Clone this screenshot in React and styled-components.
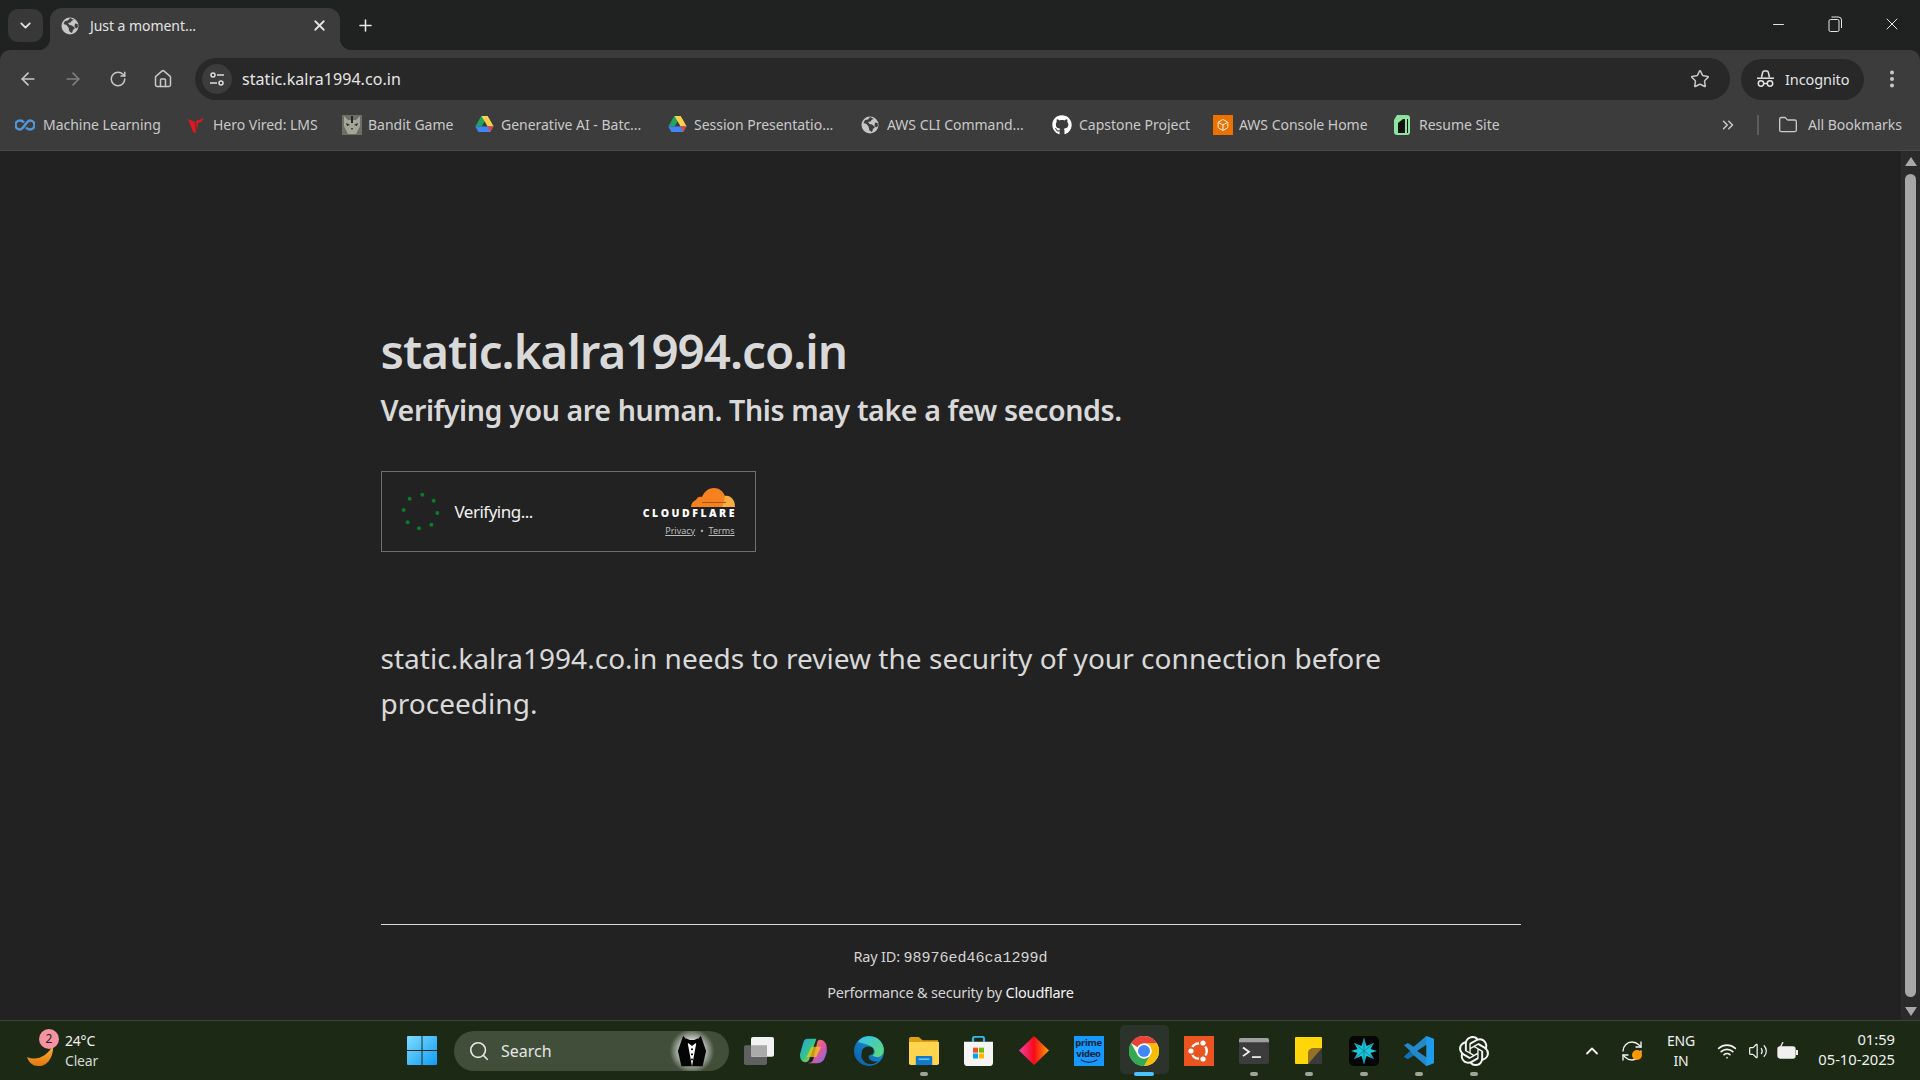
import React from 'react'
import styled, { createGlobalStyle } from 'styled-components'
import {
  ArrowLeft, ArrowRight, RotateCw, House, X, Plus, ChevronDown, ChevronUp, Star,
  EllipsisVertical, ChevronsRight, Folder, Search, Minus, Volume2, Wifi, RefreshCw, Box,
} from 'lucide-react'
import { FaGithub } from 'react-icons/fa'
import { SiOpenai } from 'react-icons/si'

const GlobalStyle = createGlobalStyle`
  html, body { margin: 0; padding: 0; height: 100%; overflow: hidden; background: #222; }
  body { font-family: "Noto Sans", "Open Sans", sans-serif; }
  * { box-sizing: border-box; }
`

const Shell = styled.div`
  width: 1920px;
  height: 1080px;
  display: flex;
  flex-direction: column;
`

/* tab strip */
const TabStrip = styled.div`
  height: 50px;
  flex: none;
  background: #202221;
  display: flex;
  align-items: flex-end;
  padding-left: 8px;
`
const TabSearch = styled.div`
  width: 35px;
  height: 33px;
  align-self: flex-start;
  margin-top: 9px;
  background: #383838;
  border-radius: 10px;
  display: flex;
  align-items: center;
  justify-content: center;
  color: #e4e4e4;
`
const Tab = styled.div`
  position: relative;
  width: 290px;
  height: 42px;
  margin-left: 7px;
  background: #3c3c3c;
  border-radius: 12px 12px 0 0;
  display: flex;
  align-items: center;
  padding: 0 12px 7px 11px;
  color: #e3e3e3;
  &::before, &::after {
    content: '';
    position: absolute;
    bottom: 0;
    width: 12px;
    height: 12px;
  }
  &::before { left: -12px; background: radial-gradient(circle at 0 0, transparent 12px, #3c3c3c 12.5px); }
  &::after { right: -12px; background: radial-gradient(circle at 100% 0, transparent 12px, #3c3c3c 12.5px); }
`
const TabTitle = styled.span`
  flex: 1;
  margin-left: 11px;
  font-size: 14px;
  letter-spacing: -0.05px;
`
const NewTab = styled.div`
  margin-left: 16px;
  height: 42px;
  padding-bottom: 7px;
  display: flex;
  align-items: center;
  color: #e8e8e8;
`
const WindowControls = styled.div`
  margin-left: auto;
  align-self: flex-start;
  display: flex;
  color: #e6e6e6;
`
const WindowButton = styled.div`
  width: 56.5px;
  height: 48px;
  display: flex;
  align-items: center;
  justify-content: center;
`

/* toolbar */
const Toolbar = styled.div`
  height: 50px;
  flex: none;
  background: #3c3c3c;
  border-radius: 10px 10px 0 0;
  display: flex;
  align-items: center;
  padding: 8px 0 0 5px;
`
const NavButton = styled.div`
  width: 45px;
  height: 36px;
  display: flex;
  align-items: center;
  justify-content: center;
  color: ${p => (p.$off ? '#7f7f7f' : '#c8c8c8')};
`
const Omnibox = styled.div`
  width: 1535px;
  height: 42px;
  margin-left: 10px;
  background: #282828;
  border-radius: 21px;
  display: flex;
  align-items: center;
  padding: 0 20px 0 7px;
`
const SiteInfo = styled.div`
  width: 30px;
  height: 30px;
  border-radius: 50%;
  background: #3c3c3c;
  display: flex;
  align-items: center;
  justify-content: center;
`
const Url = styled.span`
  flex: 1;
  margin-left: 10px;
  color: #e6e6e6;
  font-size: 16px;
  letter-spacing: 0.05px;
`
const Pill = styled.div`
  width: 123px;
  height: 41px;
  margin-left: 11px;
  border-radius: 21px;
  background: #282828;
  display: flex;
  align-items: center;
  padding-left: 15px;
  color: #e3e3e3;
  font-size: 14.5px;
  letter-spacing: -0.1px;
  gap: 10px;
`
const Kebab = styled.div`
  margin-left: 17px;
  color: #c8c8c8;
  display: flex;
`

/* bookmarks */
const BookmarkBar = styled.div`
  height: 51px;
  flex: none;
  background: #3c3c3c;
  border-bottom: 1px solid #4a4a4a;
  display: flex;
  align-items: center;
  padding: 0 18px 1px 17px;
  color: #c9c9c9;
  font-size: 14px;
  letter-spacing: -0.02px;
`
const Bookmark = styled.div`
  width: ${p => p.$w}px;
  display: flex;
  align-items: center;
  white-space: nowrap;
`
const BookmarkIcon = styled.span`
  width: 26px;
  flex: none;
  display: flex;
  align-items: center;
`
const BookmarkEnd = styled.div`
  margin-left: auto;
  display: flex;
  align-items: center;
  color: #c9c9c9;
`
const Divider = styled.span`
  width: 2px;
  height: 20px;
  margin: 0 19px 0 20px;
  background: #5c5c5c;
`

/* page */
const Viewport = styled.div`
  flex: 1;
  min-height: 0;
  display: flex;
  background: #222;
`
const Page = styled.main`
  flex: 1;
  color: #d9d9d9;
`
const Content = styled.div`
  width: 1140px;
  margin: 0 auto;
  padding-top: 170px;
`
const Heading = styled.h1`
  margin: 0;
  font-size: 47.5px;
  line-height: 60px;
  font-weight: 600;
  letter-spacing: -1px;
`
const SubHeading = styled.h2`
  margin: 8px 0 0;
  font-size: 28.6px;
  line-height: 42px;
  font-weight: 600;
  letter-spacing: -0.4px;
`
const Widget = styled.div`
  width: 375px;
  height: 81px;
  margin-top: 40px;
  border: 1px solid #6f6f6f;
  display: flex;
  align-items: center;
  padding: 0 20px 0 18px;
  color: #f2f2f2;
`
const VerifyLabel = styled.span`
  margin-left: 11px;
  font-size: 17px;
  letter-spacing: -0.5px;
  flex: 1;
`
const CloudBrand = styled.div`
  display: flex;
  flex-direction: column;
  align-items: flex-end;
`
const BrandName = styled.span`
  font-size: 10.5px;
  line-height: 10px;
  font-weight: 800;
  letter-spacing: 2.5px;
  margin-right: -2.5px;
  color: #fff;
  font-family: "Open Sans", sans-serif;
`
const BrandLinks = styled.div`
  margin-top: 7px;
  font-size: 9px;
  line-height: 12px;
  color: #bdbdbd;
  display: flex;
  gap: 5px;
  span { text-decoration: underline; }
  i { font-style: normal; }
`
const Copy = styled.p`
  margin: 84px 0 0;
  font-size: 28px;
  line-height: 45px;
  letter-spacing: 0.03px;
  color: #d9d9d9;
`
const Footer = styled.footer`
  margin-top: 198px;
  border-top: 1px solid #d9d9d9;
  padding-top: 21px;
  text-align: center;
  font-size: 14.5px;
  letter-spacing: -0.2px;
  color: #d4d4d4;
`
const FooterLine = styled.div`
  height: 20px;
  line-height: 20px;
  margin-bottom: 16px;
  b { font-weight: 400; color: #f2f2f2; }
  code { font-family: "Liberation Mono", monospace; font-size: 15px; letter-spacing: 0; }
`

const Scrollbar = styled.div`
  width: 19px;
  flex: none;
  background: #2a2a2a;
  display: flex;
  flex-direction: column;
  align-items: center;
  padding: 6px 0 4px;
  justify-content: space-between;
`
const ScrollThumb = styled.div`
  flex: 1;
  width: 11px;
  margin: 8px 0 10px;
  background: #a6a6a6;
  border-radius: 6px;
`
const ScrollArrow = styled.div`
  width: 0;
  height: 0;
  border-left: 6.5px solid transparent;
  border-right: 6.5px solid transparent;
  ${p => (p.$down ? 'border-top: 9px solid #a8a8a8;' : 'border-bottom: 9px solid #a8a8a8;')}
`

/* taskbar */
const Taskbar = styled.div`
  height: 60px;
  flex: none;
  background: #1c2a15;
  border-top: 1px solid #3b4636;
  display: flex;
  align-items: center;
  color: #f0f0f0;
`
const Weather = styled.div`
  width: 394px;
  flex: none;
  display: flex;
  align-items: center;
  padding-left: 24px;
`
const WeatherIcon = styled.div`
  position: relative;
  width: 41px;
  height: 40px;
  flex: none;
`
const Badge = styled.span`
  position: absolute;
  left: 15px;
  top: -2px;
  width: 20px;
  height: 20px;
  border-radius: 50%;
  background: #f593a2;
  color: #222;
  font-size: 12px;
  line-height: 19px;
  text-align: center;
`
const WeatherText = styled.div`
  font-size: 14px;
  line-height: 20px;
  letter-spacing: -0.2px;
  small { display: block; font-size: 14px; color: #d6d9d3; }
`
const StartButton = styled.div`
  width: 55px;
  flex: none;
  display: flex;
  justify-content: center;
`
const SearchBox = styled.div`
  width: 275px;
  height: 40px;
  flex: none;
  margin-left: 5px;
  border-radius: 20px;
  background: #414e39;
  display: flex;
  align-items: center;
  padding-left: 14px;
  color: #e6e6e6;
  font-size: 16px;
`
const SearchText = styled.span`
  margin-left: 11px;
  flex: 1;
`
const Tuxedo = styled.div`
  width: 50px;
  height: 40px;
  margin-right: 12px;
  display: flex;
  align-items: center;
  justify-content: center;
  background: radial-gradient(circle, rgba(255,255,255,.85) 30%, rgba(255,255,255,0) 70%);
`
const Apps = styled.div`
  display: flex;
  margin-left: 2px;
`
const AppSlot = styled.div`
  position: relative;
  width: 55px;
  height: 59px;
  display: flex;
  align-items: center;
  justify-content: center;
  &::before {
    content: '';
    display: ${p => (p.$active ? 'block' : 'none')};
    position: absolute;
    left: 4px;
    top: 4px;
    width: 49px;
    height: 49px;
    border-radius: 5px;
    background: #2c332a;
  }
  & > svg, & > div { position: relative; }
`
const RunDot = styled.span`
  position: absolute;
  bottom: 4px;
  left: 50%;
  transform: translateX(-50%);
  width: ${p => (p.$active ? 20 : 8)}px;
  height: 4px;
  border-radius: 2px;
  background: ${p => (p.$active ? '#4cc2ff' : '#a0a59c')};
`
const Tray = styled.div`
  margin-left: auto;
  display: flex;
  align-items: center;
  padding-right: 25px;
  height: 100%;
`
const TrayItem = styled.div`
  width: ${p => p.$w}px;
  display: flex;
  align-items: center;
  justify-content: center;
  text-align: center;
  font-size: 14px;
  line-height: 20px;
  letter-spacing: -0.2px;
  color: #f0f0f0;
`
const Clock = styled.div`
  width: 91px;
  padding-bottom: 3px;
  text-align: right;
  font-size: 14.7px;
  line-height: 20px;
  letter-spacing: 0;
`

const Globe = ({ size = 18, fill = '#c4c7c5', land = '#3c3c3c' }) => (
  <svg width={size} height={size} viewBox="0 0 18 18">
    <circle cx="9" cy="9" r="8.5" fill={fill} />
    <path d="M9 1 7 3.5 4 4 2.5 7l3 1 2 2.5 1 4L11 16l1-3 2-2-3-2.5L8.5 8 7 6l2.5-.5L11 3.5 13 3z" fill={land} />
    <path d="M14 6.5l2.5.5.5 3-2 1.5-1.5-2z" fill={land} />
  </svg>
)

const Drive = () => (
  <svg width="19" height="17" viewBox="0 0 19 17">
    <path d="M6.3 0h6.4l-6 10.5H.3z" fill="#1fa463" />
    <path d="M12.7 0l6 10.5h-6L6.5 0z" fill="#ffd04b" />
    <path d="M.3 10.5h18L15.2 16H3.4z" fill="#4285f4" />
    <path d="M12.7 10.5h5.6L15.2 16z" fill="#ea4335" />
  </svg>
)

const BanditCat = () => (
  <svg width="20" height="20" viewBox="0 0 20 20">
    <rect width="20" height="20" fill="#6c6f66" />
    <path d="M2 1l4 4h8l4-4v10l-4 8H6L2 11z" fill="#a3a599" />
    <path d="M4 8l4 2-3 1zM16 8l-4 2 3 1zM9 13h2l-1 2zM9 1h2v7H9z" fill="#26271f" />
  </svg>
)

const bookmarks = [
  { label: 'Machine Learning', w: 170, icon: (
    <svg width="20" height="12" viewBox="0 0 20 12" style={{ marginLeft: -2 }}>
      <path d="M9 3.5C7.5 1.8 6.5 1.5 5 1.5a4.5 4.5 0 0 0 0 9c3.5 0 6.5-9 10-9a4.5 4.5 0 0 1 0 9c-1.5 0-2.5-.3-4-2" fill="none" stroke="#4f97d8" strokeWidth="2.6" />
    </svg>
  ) },
  { label: 'Hero Vired: LMS', w: 155, icon: (
    <svg width="18" height="18" viewBox="0 0 18 18">
      <path d="M1 3l7 3 1 11L6 16zM9 5l8-3-3 4-3 1-1 8z" fill="#e1171e" />
    </svg>
  ) },
  { label: 'Bandit Game', w: 133, icon: <BanditCat /> },
  { label: 'Generative AI - Batc...', w: 193, icon: <Drive /> },
  { label: 'Session Presentatio...', w: 193, icon: <Drive /> },
  { label: 'AWS CLI Command...', w: 192, icon: <Globe /> },
  { label: 'Capstone Project', w: 160, icon: <FaGithub size={20} color="#fff" style={{ marginLeft: -1 }} /> },
  { label: 'AWS Console Home', w: 180, icon: (
    <svg width="20" height="20" viewBox="0 0 20 20">
      <rect width="20" height="20" fill="#ed7100" />
      <g transform="translate(3.5 3.5) scale(.54)"><Box size={24} color="#fff" strokeWidth={1.7} /></g>
    </svg>
  ) },
  { label: 'Resume Site', w: 100, icon: (
    <svg width="18" height="22" viewBox="0 0 18 22">
      <path d="M4 1h10q3 0 3 3v14q0 3-3 3H4q-3 0-3-3V6z" fill="#8fe3a0" />
      <path d="M5 9l5-4h2v14H5zM14 5h1v14h-1z" fill="#111" />
    </svg>
  ) },
]

const SiteTune = () => (
  <svg width="16" height="16" viewBox="0 0 16 16" fill="none" stroke="#dcdcdc" strokeWidth="1.5">
    <circle cx="4" cy="4" r="2" />
    <path d="M8 4h7M1 12h7" />
    <circle cx="12" cy="12" r="2" />
  </svg>
)

const IncognitoIcon = () => (
  <svg width="19" height="18" viewBox="0 0 19 18" fill="none" stroke="#e3e3e3" strokeWidth="1.5">
    <path d="M5.5 7.5L6.8 2q.2-1 1.2-1h3q1 0 1.2 1l1.3 5.5" />
    <path d="M1 8.2h17" />
    <circle cx="5" cy="13.5" r="2.7" />
    <circle cx="14" cy="13.5" r="2.7" />
    <path d="M7.7 13.5h3.6" />
  </svg>
)

const RestoreIcon = () => (
  <svg width="14" height="16" viewBox="0 0 14 16" fill="none" stroke="#e6e6e6" strokeWidth="1">
    <rect x="1" y="3.5" width="10" height="12" rx="1.5" />
    <path d="M3.5 1h7q3 0 3 3v8" />
  </svg>
)

const Spinner = () => {
  const dots = [[157, 104], [191, 122], [202, 159], [184, 194], [147, 205], [113, 187], [101, 150], [119, 116]]
  return (
    <svg width="44" height="44" viewBox="90 90 132 132">
      {dots.map(([cx, cy]) => <circle key={cx} cx={cx} cy={cy} r="6" fill="#0a7d2c" />)}
    </svg>
  )
}

const CloudLogo = () => (
  <svg width="44" height="21" viewBox="0 0 44 21">
    <path d="M0 20c0-3 2-6 5-7 1-3 4-4 6-3 2-5 6-9 12-9 5 0 9 3 11 8 1 2 1 4 0 6l-2 5z" fill="#f6821f" />
    <path d="M34 9c5-1 10 3 10 11H31c2-3 2-8 3-11z" fill="#fbad41" />
    <path d="M11 15.5h24" stroke="#a8561a" strokeWidth="1" />
  </svg>
)

const WindowsLogo = () => (
  <svg width="30" height="29" viewBox="0 0 30 30" preserveAspectRatio="none">
    <defs>
      <linearGradient id="win" x1="0" y1="0" x2="1" y2="1">
        <stop offset="0" stopColor="#7fdcff" />
        <stop offset="1" stopColor="#0f9cf5" />
      </linearGradient>
    </defs>
    <path d="M0 1q0-1 1-1h13.5v14.5H0zM15.5 0H29q1 0 1 1v13.5H15.5zM0 15.5h14.5V30H1q-1 0-1-1zM15.5 15.5H30V29q0 1-1 1H15.5z" fill="url(#win)" />
  </svg>
)

const TuxedoIcon = () => (
  <svg width="30" height="32" viewBox="0 0 34 38" preserveAspectRatio="none">
    <path d="M7 1l4 5h12l4-5 6 18-4 18H5L1 19z" fill="#050505" />
    <path d="M12 9l5 28 5-28-5 4z" fill="#fafafa" />
    <path d="M10 4l7 3 7-3v7l-7-3-7 3z" fill="#000" />
    <circle cx="17" cy="17" r="1.2" fill="#111" />
    <circle cx="17" cy="23" r="1.2" fill="#111" />
    <circle cx="17" cy="29" r="1.2" fill="#111" />
  </svg>
)

const TaskView = () => (
  <svg width="30" height="28" viewBox="0 0 30 34" preserveAspectRatio="none">
    <rect x="0" y="10" width="23" height="24" rx="2" fill="#606060" />
    <rect x="7" y="0" width="23" height="24" rx="2" fill="#f2f2f2" />
    <rect x="7" y="10" width="16" height="14" fill="#aaa" />
  </svg>
)

const Copilot = () => (
  <svg width="29" height="26" viewBox="0 0 30 30" preserveAspectRatio="none">
    <defs>
      <linearGradient id="cpa" x1="0" y1="0" x2="1" y2="1">
        <stop offset="0" stopColor="#2d9ce8" />
        <stop offset=".5" stopColor="#31c48d" />
        <stop offset="1" stopColor="#f5c518" />
      </linearGradient>
      <linearGradient id="cpb" x1="0" y1="0" x2="1" y2="1">
        <stop offset="0" stopColor="#f0a030" />
        <stop offset=".5" stopColor="#e8559a" />
        <stop offset="1" stopColor="#7a6cf0" />
      </linearGradient>
    </defs>
    <path d="M9 1h9L11 23q-1 5-5 5-5-1-5-9l3-12q1-6 5-6z" fill="url(#cpa)" />
    <path d="M21 2q5 0 7 5 2 8-1 15-2 7-8 7H9q5 0 6-5l3-15q1-7 3-7z" fill="url(#cpb)" />
    <path d="M13 10h10l-5 12H8z" fill="#f5c518" opacity=".75" />
  </svg>
)

const Edge = () => (
  <svg width="30" height="30" viewBox="0 0 31 31">
    <defs>
      <linearGradient id="eda" x1="0" y1="1" x2="1" y2="0">
        <stop offset="0" stopColor="#0c59a4" />
        <stop offset="1" stopColor="#1b9de2" />
      </linearGradient>
      <linearGradient id="edb" x1="0" y1="0" x2="1" y2="1">
        <stop offset="0" stopColor="#35c1f1" />
        <stop offset="1" stopColor="#5fdb6d" />
      </linearGradient>
    </defs>
    <circle cx="15.5" cy="15.5" r="15.5" fill="url(#eda)" />
    <path d="M4 6C8 0 18-2 25 3c5 4 7 10 5 15-2 4-8 5-11 2 3-1 3-4 1-7-4-5-12-5-16-7z" fill="url(#edb)" />
    <path d="M8 17c0-5 6-8 11-5 2 2 2 5 0 7-3 0-5 2-3 5 2 2 6 3 9 2-6 5-14 4-17-3-1-2 0-4 0-6z" fill="#1c2a15" />
  </svg>
)

const Explorer = () => (
  <svg width="30" height="28" viewBox="0 0 31 34" preserveAspectRatio="none">
    <path d="M0 2q0-2 2-2h8l4 4h16v8H0z" fill="#e0a010" />
    <path d="M0 6h31v26q0 2-2 2H2q-2 0-2-2z" fill="#ffd54f" />
    <path d="M7 24q0-1 1-1h15q1 0 1 1v10H7z" fill="#0f7ac6" />
    <path d="M10 26h11v2H10z" fill="#6cc0f5" />
  </svg>
)

const Store = () => (
  <svg width="29" height="30" viewBox="0 0 29 36" preserveAspectRatio="none">
    <path d="M9 7V3q0-2 2-2h7q2 0 2 2v4" fill="none" stroke="#39b6e8" strokeWidth="2.2" />
    <path d="M0 7h29v25q0 4-4 4H4q-4 0-4-4z" fill="#f5f5f5" />
    <rect x="9" y="14" width="5" height="6" fill="#f25022" />
    <rect x="15" y="14" width="5" height="6" fill="#7fba00" />
    <rect x="9" y="21" width="5" height="6" fill="#00a4ef" />
    <rect x="15" y="21" width="5" height="6" fill="#ffb900" />
  </svg>
)

const Diamond = () => (
  <svg width="30" height="29" viewBox="0 0 30 36" preserveAspectRatio="none">
    <defs>
      <linearGradient id="dia" x1="0" y1="0" x2="1" y2="0">
        <stop offset="0" stopColor="#f53dab" />
        <stop offset=".5" stopColor="#f50a18" />
        <stop offset="1" stopColor="#ffa000" />
      </linearGradient>
    </defs>
    <path d="M15 0l15 18-15 18L0 18z" fill="url(#dia)" />
  </svg>
)

const PrimeBox = styled.div`
  width: 30px;
  height: 30px;
  background: #1399ff;
  color: #0d2236;
  font-size: 9.5px;
  line-height: 11px;
  font-weight: 700;
  text-align: center;
  padding-top: 1px;
  letter-spacing: -0.3px;
  svg { display: block; margin: 0 auto; }
`
const Prime = () => (
  <PrimeBox>
    prime<br />video
    <svg width="22" height="6" viewBox="0 0 24 8">
      <path d="M1 1q11 7 22 0" fill="none" stroke="#0d2236" strokeWidth="1.8" />
    </svg>
  </PrimeBox>
)

const Chrome = () => (
  <svg width="30" height="30" viewBox="0 0 30 30">
    <circle cx="15" cy="15" r="15" fill="#f5f5f5" />
    <path d="M15 0a15 15 0 0 1 13 7.5H15a7.5 7.5 0 0 0-6.5 3.75L2 7A15 15 0 0 1 15 0z" fill="#ea4335" />
    <path d="M28 7.5A15 15 0 0 1 15 30l6.5-11.25A7.5 7.5 0 0 0 15 7.5z" fill="#fbbc04" />
    <path d="M2 7l6.5 11.75A7.5 7.5 0 0 0 21.5 18.75L15 30A15 15 0 0 1 2 7z" fill="#34a853" />
    <circle cx="15" cy="15" r="7.5" fill="#fff" />
    <circle cx="15" cy="15" r="6" fill="#4285f4" />
  </svg>
)

const Ubuntu = () => (
  <svg width="30" height="30" viewBox="0 0 30 30">
    <rect width="30" height="30" fill="#e95420" />
    <circle cx="15" cy="15" r="7.8" fill="none" stroke="#fff" strokeWidth="2.4" />
    {[[19, 7], [7, 15], [19, 23]].map(([cx, cy]) => (
      <g key={cy + cx}>
        <circle cx={cx} cy={cy} r="4.2" fill="#e95420" />
        <circle cx={cx} cy={cy} r="2.6" fill="#fff" />
      </g>
    ))}
  </svg>
)

const Terminal = () => (
  <svg width="30" height="26" viewBox="0 0 30 30" preserveAspectRatio="none">
    <rect width="30" height="30" rx="2" fill="#3c3c3c" />
    <path d="M2 0h26q2 0 2 2v3H0V2q0-2 2-2z" fill="#a0a0a0" />
    <path d="M4 11l6 5-6 5" fill="none" stroke="#eee" strokeWidth="2" />
    <path d="M13 22h9" stroke="#eee" strokeWidth="2" />
  </svg>
)

const Sticky = () => (
  <svg width="27" height="27" viewBox="0 0 27 34" preserveAspectRatio="none">
    <path d="M1 0h25q1 0 1 1v19L13 34H1q-1 0-1-1V1q0-1 1-1z" fill="#ffd60a" />
    <path d="M27 14v19q0 1-1 1H13V21q0-7 7-7z" fill="#3a3a3a" />
    <path d="M27 14L13 34V21q0-7 7-7z" fill="#e0a010" opacity=".55" />
  </svg>
)

const XApp = () => (
  <svg width="30" height="30" viewBox="0 0 30 30">
    <rect width="30" height="30" rx="5" fill="#050505" />
    <path d="M15 2l2.5 8L25 7l-3.5 6L28 15l-6.5 2 3.5 6-7.5-3L15 28l-2.5-8L5 23l3.5-6L2 15l6.5-2L5 7l7.5 3z" fill="#1cc4d8" />
    <path d="M15 2v26M5 7l20 16M25 7L5 23" stroke="#0b7f92" strokeWidth=".8" />
  </svg>
)

const VsCode = () => (
  <svg width="30" height="30" viewBox="0 0 31 36" preserveAspectRatio="none">
    <path d="M23 0l8 3.5v29L23 36 10 23l-6 4.5L0 25l6.5-7L0 11l4-2.5 6 4.5z" fill="#2489ca" />
    <path d="M23 0l8 3.5v29L23 36z" fill="#1e9bea" />
    <path d="M23 10.5L13.5 18l9.5 7.5z" fill="#1c2a15" />
    <path d="M0 25l6.5-7 3.5 5-6 4.5z" fill="#0f6fb0" />
  </svg>
)

const apps = [
  { key: 'view', el: <TaskView /> },
  { key: 'copilot', el: <Copilot /> },
  { key: 'edge', el: <Edge /> },
  { key: 'explorer', el: <Explorer />, run: true },
  { key: 'store', el: <Store /> },
  { key: 'diamond', el: <Diamond /> },
  { key: 'prime', el: <Prime /> },
  { key: 'chrome', el: <Chrome />, run: true, active: true },
  { key: 'ubuntu', el: <Ubuntu /> },
  { key: 'terminal', el: <Terminal />, run: true },
  { key: 'sticky', el: <Sticky />, run: true },
  { key: 'x', el: <XApp />, run: true },
  { key: 'vscode', el: <VsCode />, run: true },
  { key: 'gpt', el: <SiOpenai size={30} color="#f5f5f5" />, run: true },
]

const MoonShape = styled.svg`
  position: absolute;
  left: 2px;
  top: 14px;
`
const Moon = () => (
  <MoonShape width="30" height="26" viewBox="0 0 30 26">
    <defs>
      <linearGradient id="moon" x1="0" y1="0" x2="0" y2="1">
        <stop offset="0" stopColor="#fbb938" />
        <stop offset="1" stopColor="#e2760f" />
      </linearGradient>
    </defs>
    <path d="M27 0c1 12-6 22-15 21C7 21 3 18 1 12c9 4 20 0 26-12z" fill="url(#moon)" />
  </MoonShape>
)

const Battery = () => (
  <svg width="22" height="18" viewBox="0 0 22 18" fill="none" stroke="#f0f0f0" strokeWidth="1.3">
    <rect x="1" y="5" width="17" height="11" rx="2" fill="#f0f0f0" />
    <path d="M20 8v5" strokeWidth="2" />
    <path d="M6 0L3 6h4L4 11" strokeWidth="1.3" />
  </svg>
)

const SyncIcon = () => (
  <svg width="24" height="24" viewBox="0 0 24 24">
    <RefreshCw size={24} color="#f0f0f0" strokeWidth={1.4} />
    <circle cx="17" cy="16" r="5" fill="#ff9800" />
  </svg>
)

export default function App() {
  return (
    <Shell>
      <GlobalStyle />
      <TabStrip>
        <TabSearch><ChevronDown size={17} strokeWidth={2.5} /></TabSearch>
        <Tab>
          <Globe />
          <TabTitle>Just a moment...</TabTitle>
          <X size={17} strokeWidth={2.5} />
        </Tab>
        <NewTab><Plus size={19} strokeWidth={2} /></NewTab>
        <WindowControls>
          <WindowButton><Minus size={17} strokeWidth={1.4} /></WindowButton>
          <WindowButton><RestoreIcon /></WindowButton>
          <WindowButton><X size={20} strokeWidth={1.2} /></WindowButton>
        </WindowControls>
      </TabStrip>

      <Toolbar>
        <NavButton><ArrowLeft size={20} /></NavButton>
        <NavButton $off><ArrowRight size={20} /></NavButton>
        <NavButton><RotateCw size={18} /></NavButton>
        <NavButton><House size={20} strokeWidth={1.8} /></NavButton>
        <Omnibox>
          <SiteInfo><SiteTune /></SiteInfo>
          <Url>static.kalra1994.co.in</Url>
          <Star size={20} color="#c8c8c8" strokeWidth={1.8} />
        </Omnibox>
        <Pill><IncognitoIcon />Incognito</Pill>
        <Kebab><EllipsisVertical size={22} strokeWidth={2.4} /></Kebab>
      </Toolbar>

      <BookmarkBar>
        {bookmarks.map(b => (
          <Bookmark key={b.label} $w={b.w}>
            <BookmarkIcon>{b.icon}</BookmarkIcon>
            {b.label}
          </Bookmark>
        ))}
        <BookmarkEnd>
          <ChevronsRight size={18} />
          <Divider />
          <Folder size={20} strokeWidth={1.6} style={{ marginRight: 10 }} />
          All Bookmarks
        </BookmarkEnd>
      </BookmarkBar>

      <Viewport>
        <Page>
          <Content>
            <Heading>static.kalra1994.co.in</Heading>
            <SubHeading>Verifying you are human. This may take a few seconds.</SubHeading>
            <Widget>
              <Spinner />
              <VerifyLabel>Verifying...</VerifyLabel>
              <CloudBrand>
                <CloudLogo />
                <BrandName>CLOUDFLARE</BrandName>
                <BrandLinks><span>Privacy</span><i>•</i><span>Terms</span></BrandLinks>
              </CloudBrand>
            </Widget>
            <Copy>static.kalra1994.co.in needs to review the security of your connection before proceeding.</Copy>
            <Footer>
              <FooterLine>Ray ID: <code>98976ed46ca1299d</code></FooterLine>
              <FooterLine>Performance &amp; security by <b>Cloudflare</b></FooterLine>
            </Footer>
          </Content>
        </Page>
        <Scrollbar>
          <ScrollArrow />
          <ScrollThumb />
          <ScrollArrow $down />
        </Scrollbar>
      </Viewport>

      <Taskbar>
        <Weather>
          <WeatherIcon><Moon /><Badge>2</Badge></WeatherIcon>
          <WeatherText>24°C<small>Clear</small></WeatherText>
        </Weather>
        <StartButton><WindowsLogo /></StartButton>
        <SearchBox>
          <Search size={22} strokeWidth={1.8} />
          <SearchText>Search</SearchText>
          <Tuxedo><TuxedoIcon /></Tuxedo>
        </SearchBox>
        <Apps>
          {apps.map(a => (
            <AppSlot key={a.key} $active={a.active}>
              {a.el}
              {a.run && <RunDot $active={a.active} />}
            </AppSlot>
          ))}
        </Apps>
        <Tray>
          <TrayItem $w={40}><ChevronUp size={20} strokeWidth={2.2} /></TrayItem>
          <TrayItem $w={40}><SyncIcon /></TrayItem>
          <TrayItem $w={58}>ENG<br />IN</TrayItem>
          <TrayItem $w={34}><Wifi size={20} strokeWidth={2} /></TrayItem>
          <TrayItem $w={28}><Volume2 size={20} strokeWidth={1.5} /></TrayItem>
          <TrayItem $w={32}><Battery /></TrayItem>
          <Clock>01:59<br />05-10-2025</Clock>
        </Tray>
      </Taskbar>
    </Shell>
  )
}
